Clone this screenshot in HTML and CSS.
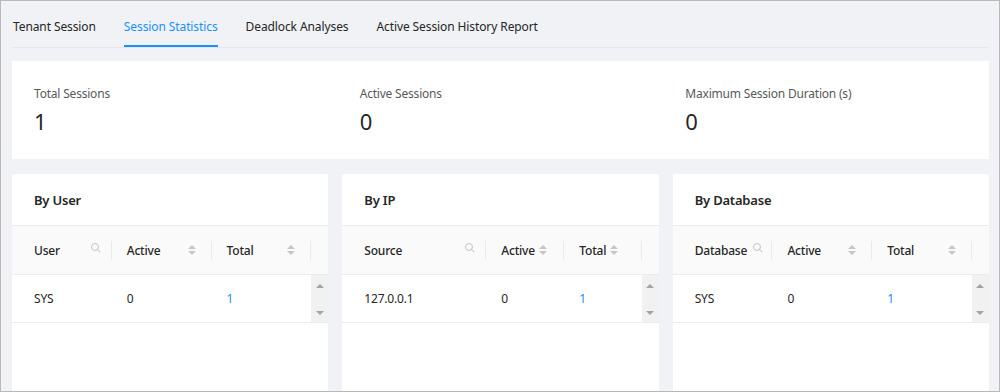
FILE: index.html
```html
<!DOCTYPE html>
<html lang="en">

<head>
	<meta charset="UTF-8">
	<meta name="viewport" content="width=device-width, initial-scale=1.0">
	<title>Session Statistics</title>
	<link rel="stylesheet" href="styles.css">
</head>

<body>
	<div class="page">
		<div class="tabs">
			<span class="tabs__item">Tenant Session</span>
			<span class="tabs__item tabs__item--active">Session Statistics</span>
			<span class="tabs__item">Deadlock Analyses</span>
			<span class="tabs__item">Active Session History Report</span>
		</div>

		<div class="summary">
			<div class="summary__item">
				<div class="summary__label">Total Sessions</div>
				<div class="summary__value">1</div>
			</div>
			<div class="summary__item">
				<div class="summary__label">Active Sessions</div>
				<div class="summary__value">0</div>
			</div>
			<div class="summary__item">
				<div class="summary__label">Maximum Session Duration (s)</div>
				<div class="summary__value">0</div>
			</div>
		</div>

		<div class="panels">
			<div class="panel">
				<div class="panel__title">By User</div>
				<div class="grid grid--even grid--head">
					<div class="cell"><span>User</span><i class="icon-search"></i></div>
					<div class="cell"><span>Active</span><i class="icon-sort"></i></div>
					<div class="cell"><span>Total</span><i class="icon-sort"></i></div>
					<div class="cell cell--gutter"></div>
				</div>
				<div class="grid grid--even grid--row">
					<div class="cell">SYS</div>
					<div class="cell">0</div>
					<div class="cell cell--link">1</div>
					<div class="scroll"><i class="scroll__up"></i><i class="scroll__down"></i></div>
				</div>
			</div>

			<div class="panel">
				<div class="panel__title">By IP</div>
				<div class="grid grid--ip grid--head">
					<div class="cell"><span>Source</span><i class="icon-search"></i></div>
					<div class="cell cell--tight"><span>Active</span><i class="icon-sort"></i></div>
					<div class="cell cell--tight"><span>Total</span><i class="icon-sort"></i></div>
					<div class="cell cell--gutter"></div>
				</div>
				<div class="grid grid--ip grid--row">
					<div class="cell">127.0.0.1</div>
					<div class="cell">0</div>
					<div class="cell cell--link">1</div>
					<div class="scroll"><i class="scroll__up"></i><i class="scroll__down"></i></div>
				</div>
			</div>

			<div class="panel">
				<div class="panel__title">By Database</div>
				<div class="grid grid--even grid--head">
					<div class="cell cell--db"><span>Database</span><i class="icon-search"></i></div>
					<div class="cell"><span>Active</span><i class="icon-sort"></i></div>
					<div class="cell"><span>Total</span><i class="icon-sort"></i></div>
					<div class="cell cell--gutter"></div>
				</div>
				<div class="grid grid--even grid--row">
					<div class="cell">SYS</div>
					<div class="cell">0</div>
					<div class="cell cell--link">1</div>
					<div class="scroll"><i class="scroll__up"></i><i class="scroll__down"></i></div>
				</div>
			</div>
		</div>
	</div>
</body>

</html>
```

FILE: styles.css
```css
* {
	box-sizing: border-box;
}

body {
	margin: 0;
	font-family: "Noto Sans", "Open Sans", sans-serif;
	letter-spacing: -0.2px;
	color: #262626;
}

.page {
	height: 392px;
	overflow: hidden;
	background: #f0f2f5;
	border: 1px solid #b8b8b8;
	padding: 0 10px 0 11px;
}

.tabs {
	display: flex;
	height: 47px;
	border-bottom: 1px solid #e4e6ea;
	padding-left: 1px;
}

.tabs__item {
	font-size: 12px;
	line-height: 18px;
	padding-top: 17px;
	margin-right: 28px;
	color: #262626;
	height: 46px;
	letter-spacing: -0.1px;
}

.tabs__item--active {
	color: #1890ff;
	border-bottom: 2px solid #1890ff;
}

.summary {
	display: flex;
	background: #fff;
	margin-top: 13px;
	height: 98px;
	padding-top: 24px;
}

.summary__item {
	flex: 1;
	padding-left: 22px;
}

.summary__label {
	font-size: 12px;
	line-height: 18px;
	color: #595959;
}

.summary__value {
	font-size: 22px;
	line-height: 30px;
	margin-top: 3px;
	color: #262626;
	letter-spacing: 0;
}

.panels {
	display: flex;
	gap: 14px;
	margin-top: 15px;
}

.panel {
	flex: 1;
	background: #fff;
	border-radius: 2px;
	height: 240px;
}

.panel__title {
	height: 52px;
	padding: 16px 22px 0;
	font-size: 13px;
	line-height: 20px;
	font-weight: 600;
	border-bottom: 1px solid #ececec;
}

.grid {
	display: grid;
	border-bottom: 1px solid #ececec;
}

.grid--even {
	grid-template-columns: 1fr 1fr 1fr 17px;
}

.grid--ip {
	grid-template-columns: 144px 78px 1fr 17px;
}

.grid--head {
	height: 49px;
	background: #fafafa;
	font-weight: 500;
}

.grid--row {
	height: 48px;
}

.cell {
	position: relative;
	display: flex;
	align-items: center;
	justify-content: space-between;
	padding: 0 16px 0 15px;
	font-size: 12px;
}

.cell:first-child {
	padding-left: 22px;
	padding-right: 11px;
}

.cell--db:first-child {
	padding-right: 9px;
}

.cell--tight {
	justify-content: flex-start;
	gap: 4px;
}

.grid--head .cell:not(.cell--gutter)::after {
	content: "";
	position: absolute;
	right: 0;
	top: 15px;
	height: 19px;
	width: 1px;
	background: #ebebeb;
}

.cell--link {
	color: #1890ff;
}

.icon-search {
	position: relative;
	width: 10px;
	height: 10px;
	margin-top: -4px;
}

.icon-search::before {
	content: "";
	position: absolute;
	left: 0;
	top: 0;
	width: 6px;
	height: 6px;
	border: 1px solid #c4c4c4;
	border-radius: 50%;
}

.icon-search::after {
	content: "";
	position: absolute;
	left: 7px;
	top: 5px;
	width: 1px;
	height: 5px;
	background: #c4c4c4;
	transform: rotate(-45deg);
}

.icon-sort {
	display: flex;
	flex-direction: column;
	gap: 2px;
	width: 8px;
}

.icon-sort::before,
.icon-sort::after {
	content: "";
	width: 0;
	height: 0;
	border-left: 4px solid transparent;
	border-right: 4px solid transparent;
}

.icon-sort::before {
	border-bottom: 4px solid #c6c6c6;
}

.icon-sort::after {
	border-top: 4px solid #c6c6c6;
}

.scroll {
	display: flex;
	flex-direction: column;
	justify-content: space-between;
	align-items: center;
	background: #f1f1f1;
	padding: 9px 0 7px;
}

.scroll__up,
.scroll__down {
	width: 0;
	height: 0;
	border-left: 4px solid transparent;
	border-right: 4px solid transparent;
}

.scroll__up {
	border-bottom: 4px solid #a3a3a3;
}

.scroll__down {
	border-top: 4px solid #a3a3a3;
}
```
